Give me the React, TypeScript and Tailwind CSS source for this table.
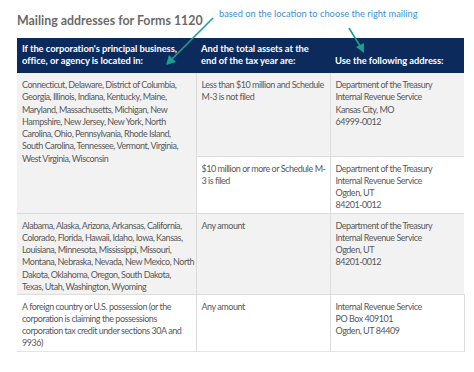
import React from "react";

const cell = "align-top px-[5px] pt-[6px] border-l border-[#dcdcdc] whitespace-nowrap";

function Lines({ lines }: { lines: string[] }) {
  return (
    <>
      {lines.map((l, i) => (
        <div key={i}>{l}</div>
      ))}
    </>
  );
}

const dept1 = ["Department of the Treasury", "Internal Revenue Service", "Kansas City, MO", "64999-0012"];
const dept2 = ["Department of the Treasury", "Internal Revenue Service", "Ogden, UT", "84201-0012"];

export default function App() {
  return (
    <div className="relative w-[474px] h-[372px] bg-white overflow-hidden font-[Lato,sans-serif]">
      <div className="relative h-[38px]">
        <h1 className="absolute left-[17px] top-[13px] text-[12.4px] font-bold text-[#6a6a6a] leading-[15px]">
          Mailing addresses for Forms 1120
        </h1>
        <span className="absolute left-[219px] top-[8px] text-[9.3px] text-[#3f8fd8] leading-[12px]">
          based on the location to choose the right mailing
        </span>
      </div>
      <table className="ml-[17px] w-[447px] table-fixed border-collapse text-[9px] tracking-[-0.47px] leading-[12.3px] text-[#595959]">
        <colgroup>
          <col className="w-[179px]" />
          <col className="w-[134px]" />
          <col className="w-[134px]" />
        </colgroup>
        <thead>
          <tr className="h-[35px] bg-[#0c2b5c] text-white text-[9.4px] tracking-[-0.05px] leading-[12px]">
            <th className="align-bottom text-left px-[5px] pb-[6px] font-bold whitespace-nowrap">
              <Lines lines={["If the corporation's principal business,", "office, or agency is located in:"]} />
            </th>
            <th className="align-bottom text-left px-[5px] pb-[6px] font-bold whitespace-nowrap">
              <Lines lines={["And the total assets at the", "end of the tax year are:"]} />
            </th>
            <th className="align-bottom text-left px-[5px] pb-[6px] font-bold whitespace-nowrap">Use the following address:</th>
          </tr>
        </thead>
        <tbody>
          <tr className="h-[83px] bg-[#f2f2f2] border-b border-[#dcdcdc]">
            <td rowSpan={2} className={cell + " border-l-0 bg-[#f2f2f2]"}>
              <Lines
                lines={[
                  "Connecticut, Delaware, District of Columbia,",
                  "Georgia, Illinois, Indiana, Kentucky, Maine,",
                  "Maryland, Massachusetts, Michigan, New",
                  "Hampshire, New Jersey, New York, North",
                  "Carolina, Ohio, Pennsylvania, Rhode Island,",
                  "South Carolina, Tennessee, Vermont, Virginia,",
                  "West Virginia, Wisconsin",
                ]}
              />
            </td>
            <td className={cell}>
              <Lines lines={["Less than $10 million and Schedule", "M-3 is not filed"]} />
            </td>
            <td className={cell}>
              <Lines lines={dept1} />
            </td>
          </tr>
          <tr className="h-[57px] bg-white border-b border-[#dcdcdc]">
            <td className={cell}>
              <Lines lines={["$10 million or more or Schedule M-", "3 is filed"]} />
            </td>
            <td className={cell}>
              <Lines lines={dept2} />
            </td>
          </tr>
          <tr className="h-[81px] bg-[#f2f2f2] border-b border-[#dcdcdc]">
            <td className={cell + " border-l-0"}>
              <Lines
                lines={[
                  "Alabama, Alaska, Arizona, Arkansas, California,",
                  "Colorado, Florida, Hawaii, Idaho, Iowa, Kansas,",
                  "Louisiana, Minnesota, Mississippi, Missouri,",
                  "Montana, Nebraska, Nevada, New Mexico, North",
                  "Dakota, Oklahoma, Oregon, South Dakota,",
                  "Texas, Utah, Washington, Wyoming",
                ]}
              />
            </td>
            <td className={cell}>Any amount</td>
            <td className={cell}>
              <Lines lines={dept2} />
            </td>
          </tr>
          <tr className="h-[57px] bg-white border-b border-[#e4e4e4]">
            <td className={cell + " border-l-0"}>
              <Lines
                lines={[
                  "A foreign country or U.S. possession (or the",
                  "corporation is claiming the possessions",
                  "corporation tax credit under sections 30A and",
                  "9936)",
                ]}
              />
            </td>
            <td className={cell}>Any amount</td>
            <td className={cell + " border-r"}>
              <Lines lines={["Internal Revenue Service", "PO Box 409101", "Ogden, UT 84409"]} />
            </td>
          </tr>
        </tbody>
      </table>
      <svg className="absolute left-0 top-0 pointer-events-none" width="474" height="372" viewBox="0 0 474 372">
        <line x1="213" y1="18" x2="172" y2="59" stroke="#1c9e8f" strokeWidth="1.6" />
        <polygon points="166,65 169,55 176,62" fill="#1c9e8f" />
        <line x1="349" y1="28" x2="360" y2="46" stroke="#1c9e8f" strokeWidth="1.6" />
        <polygon points="364,53 356,47 364,43" fill="#1c9e8f" />
      </svg>
    </div>
  );
}
